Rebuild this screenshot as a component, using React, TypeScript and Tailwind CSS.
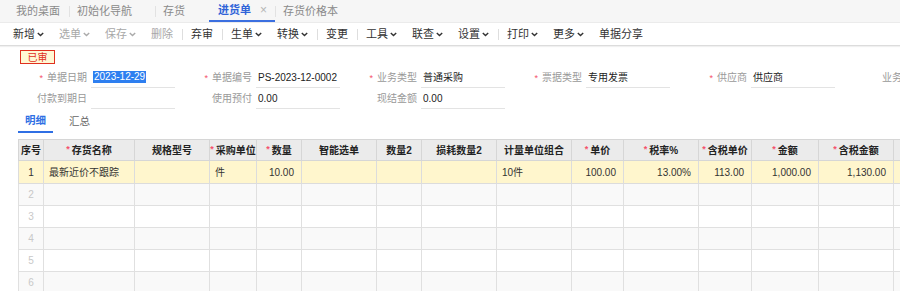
import React from 'react'

const Chevron = ({ muted }: { muted?: boolean }) => (
  <svg width="7" height="5" viewBox="0 0 7 5" className="ml-[2px]">
    <path d="M0.8 0.9L3.5 3.6L6.2 0.9" fill="none" stroke={muted ? '#aaa' : '#333'} strokeWidth="1.4" />
  </svg>
)

type ToolItem = { label: string; drop?: boolean; muted?: boolean } | 'sep'

const tools: ToolItem[] = [
  { label: '新增', drop: true },
  { label: '选单', drop: true, muted: true },
  { label: '保存', drop: true, muted: true },
  { label: '删除', muted: true },
  'sep',
  { label: '弃审' },
  'sep',
  { label: '生单', drop: true },
  { label: '转换', drop: true },
  'sep',
  { label: '变更' },
  'sep',
  { label: '工具', drop: true },
  { label: '联查', drop: true },
  { label: '设置', drop: true },
  'sep',
  { label: '打印', drop: true },
  { label: '更多', drop: true },
  { label: '单据分享' },
]

function Field({ label, value, required, selected }: { label: string; value?: string; required?: boolean; selected?: boolean }) {
  return (
    <div className="w-[165px] shrink-0 flex items-center h-[21px]">
      <div className="w-[70px] text-right text-[#999] whitespace-nowrap">
        {required && <span className="text-[#f5506a] mr-[4px] text-[9px]">*</span>}
        {label}
      </div>
      <div className="ml-[4px] w-[84px] h-full border-b border-[#e3e3e3] flex items-center pl-[2px] text-[#222]">
        {selected ? <span className="bg-[#2e7ff0] text-white px-[1px] leading-[12px]">{value}</span> : value}
      </div>
    </div>
  )
}

const cols = [
  { w: 25, h: '序号', align: 'center' },
  { w: 91, h: '存货名称', req: true },
  { w: 75, h: '规格型号' },
  { w: 47, h: '采购单位', req: true },
  { w: 45, h: '数量', req: true, num: true },
  { w: 75, h: '智能选单' },
  { w: 45, h: '数量2', num: true },
  { w: 75, h: '损耗数量2', num: true },
  { w: 75, h: '计量单位组合' },
  { w: 52, h: '单价', req: true, num: true },
  { w: 75, h: '税率%', req: true, num: true },
  { w: 53, h: '含税单价', req: true, num: true },
  { w: 67, h: '金额', req: true, num: true },
  { w: 75, h: '含税金额', req: true, num: true },
  { w: 60, h: '' },
]

const firstRow = ['1', '最新近价不跟踪', '', '件', '10.00', '', '', '', '10件', '100.00', '13.00%', '113.00', '1,000.00', '1,130.00', '']

export default function App() {
  return (
    <div className="w-[900px] h-[291px] overflow-hidden bg-white font-['Liberation_Sans','Noto_Sans_CJK_SC',sans-serif] text-[10px] text-[#333]">
      {/* tab strip */}
      <div className="h-[22px] bg-[#f6f6f6] flex items-stretch text-[11px] text-[#8a8a8a]">
        <div className="w-[69px] pl-[16px] flex items-center">我的桌面</div>
        <div className="w-[86px] pl-[8px] flex items-center relative">
          <span className="absolute left-0 top-[6px] w-px h-[11px] bg-[#e2e2e2]" />
          初始化导航
        </div>
        <div className="w-[54px] pl-[8px] flex items-center relative">
          <span className="absolute left-0 top-[6px] w-px h-[11px] bg-[#e2e2e2]" />
          存货
        </div>
        <div className="w-[66px] pl-[9px] flex items-center border-b-2 border-[#3b6fe0] text-[#2f63d8] font-bold">
          进货单
          <span className="ml-[9px] text-[#b5b5b5] font-normal text-[12px]">×</span>
        </div>
        <div className="pl-[8px] flex items-center relative">
          <span className="absolute left-0 top-[6px] w-px h-[11px] bg-[#e2e2e2]" />
          存货价格本
        </div>
      </div>

      {/* toolbar */}
      <div className="h-[24px] border-t border-[#ebebeb] border-b border-b-[#dcdcdc] shadow-[0_1px_1px_rgba(0,0,0,0.06)] flex items-center pl-[13px] text-[11px]">
        {tools.map((t, i) =>
          t === 'sep' ? (
            <span key={i} className="w-px h-[11px] bg-[#dedede] -ml-[6px] mr-[8px]" />
          ) : (
            <span key={i} className={`flex items-center mr-[15px] ${t.muted ? 'text-[#a8a8a8]' : 'text-[#333]'}`}>
              {t.label}
              {t.drop && <Chevron muted={t.muted} />}
            </span>
          )
        )}
      </div>

      {/* status */}
      <div className="mt-[4px] ml-[20px] w-[35px] h-[14px] border-[1.5px] border-[#e0301e] bg-[#fff8d4] text-[#e0301e] flex items-center justify-center">
        已审
      </div>

      {/* header form */}
      <div className="mt-[3px] pl-[17px] flex">
        <Field label="单据日期" value="2023-12-29" required selected />
        <Field label="单据编号" value="PS-2023-12-0002" required />
        <Field label="业务类型" value="普通采购" required />
        <Field label="票据类型" value="专用发票" required />
        <Field label="供应商" value="供应商" required />
        <Field label="业务员" />
      </div>
      <div className="pl-[17px] flex">
        <Field label="付款到期日" />
        <Field label="使用预付" value="0.00" />
        <Field label="现结金额" value="0.00" />
      </div>

      {/* detail tabs */}
      <div className="mt-[2px] ml-[18px] flex items-stretch h-[22px] text-[10.5px]">
        <div className="w-[35px] flex items-center justify-center border-b-2 border-[#2f6fe4] text-[#2f6fe4] font-bold">明细</div>
        <div className="ml-[16px] flex items-center text-[#666]">汇总</div>
      </div>

      {/* grid */}
      <div className="mt-[6px] ml-[18px] overflow-hidden">
        <table className="table-fixed border-collapse w-[935px]">
          <colgroup>
            {cols.map((c, i) => (
              <col key={i} style={{ width: c.w }} />
            ))}
          </colgroup>
          <thead>
            <tr className="bg-[#ebebeb] h-[21px]">
              {cols.map((c, i) => (
                <th key={i} className="border border-[#d6d6d6] font-bold text-[#222] text-center whitespace-nowrap p-0">
                  {c.req && <span className="text-[#f5506a] text-[9px] mr-[2px] align-top">*</span>}
                  {c.h}
                </th>
              ))}
            </tr>
          </thead>
          <tbody>
            <tr className="bg-[#fff6cd] h-[23px]">
              {firstRow.map((v, i) => (
                <td
                  key={i}
                  className={`border border-[#dcdcdc] whitespace-nowrap ${
                    i === 0 ? 'text-center' : cols[i].num ? 'text-right pr-[7px]' : 'text-left pl-[5px]'
                  }`}
                >
                  {v}
                </td>
              ))}
            </tr>
            {[2, 3, 4, 5, 6].map((n) => (
              <tr key={n} className={`h-[22px] ${n % 2 === 0 ? 'bg-[#f9f9f9]' : 'bg-white'}`}>
                {cols.map((c, i) => (
                  <td key={i} className={`border border-[#e0e0e0] ${i === 0 ? 'text-center text-[#c8c8c8]' : ''}`}>
                    {i === 0 ? n : ''}
                  </td>
                ))}
              </tr>
            ))}
          </tbody>
        </table>
      </div>
    </div>
  )
}
